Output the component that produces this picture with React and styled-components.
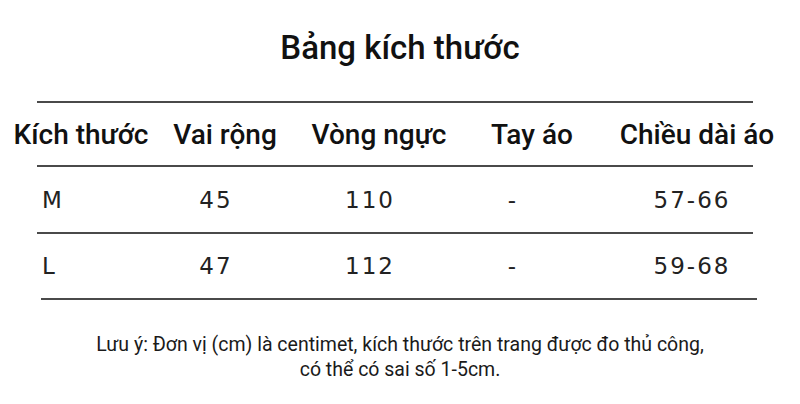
import React from "react";
import styled, { createGlobalStyle } from "styled-components";

const Global = createGlobalStyle`
  body {
    margin: 0;
    background: #ffffff;
  }
`;

const Page = styled.div`
  width: 800px;
  height: 404px;
  display: flex;
  flex-direction: column;
  background: #fff;
  color: #111;
  font-family: Roboto, "Liberation Sans", sans-serif;
  overflow: hidden;
`;

const Title = styled.h1`
  margin: 0;
  padding-top: 28px;
  font-size: 33px;
  line-height: 40px;
  font-weight: 500;
  text-align: center;
`;

const Rule = styled.div`
  height: 2px;
  background: #4a4a4a;
  width: 716px;
  margin-top: ${(p) => p.top || 0}px;
  margin-left: ${(p) => p.left || 37}px;
`;

const HeadRow = styled.div`
  display: grid;
  grid-template-columns: 162px 126px 182px 124px 206px;
  height: 62px;
  align-items: center;
  font-size: 28px;
  font-weight: 500;
  color: #111;
`;

const HeadCell = styled.div`
  text-align: center;
  white-space: nowrap;
`;

const DataRow = styled.div`
  display: grid;
  grid-template-columns: 132px 168px 140px 146px 212px;
  height: ${(p) => p.h}px;
  align-items: center;
  font-family: "DejaVu Sans", sans-serif;
  font-size: 23px;
  letter-spacing: 2px;
  color: #222;
`;

const DataCell = styled.div`
  text-align: ${(p) => (p.first ? "left" : "center")};
  padding-left: ${(p) => (p.first ? "42px" : "0")};
  white-space: nowrap;
`;

const Note = styled.p`
  margin: 32px 0 0;
  font-size: 19.5px;
  line-height: 25px;
  text-align: center;
  color: #1a1a1a;
`;

const headers = ["Kích thước", "Vai rộng", "Vòng ngực", "Tay áo", "Chiều dài áo"];

const rows = [
  { cells: ["M", "45", "110", "-", "57-66"], h: 65 },
  { cells: ["L", "47", "112", "-", "59-68"], h: 64 },
];

export default function App() {
  return (
    <Page>
      <Global />
      <Title>Bảng kích thước</Title>
      <Rule top={33} />
      <HeadRow>
        {headers.map((h) => (
          <HeadCell key={h}>{h}</HeadCell>
        ))}
      </HeadRow>
      <Rule />
      {rows.map((r, i) => (
        <React.Fragment key={r.cells[0]}>
          <DataRow h={r.h}>
            {r.cells.map((c, j) => (
              <DataCell key={j} first={j === 0}>
                {c}
              </DataCell>
            ))}
          </DataRow>
          <Rule left={i === rows.length - 1 ? 41 : 37} />
        </React.Fragment>
      ))}
      <Note>
        Lưu ý: Đơn vị (cm) là centimet, kích thước trên trang được đo thủ công,
        <br />
        có thể có sai số 1-5cm.
      </Note>
    </Page>
  );
}
